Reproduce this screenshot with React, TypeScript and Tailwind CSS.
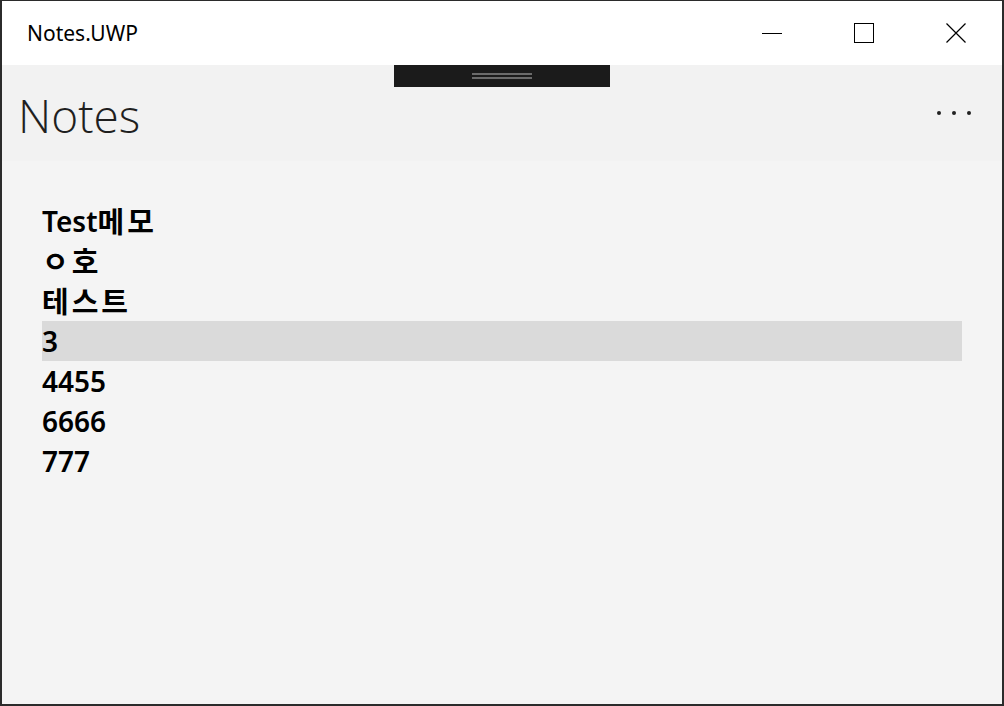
import React from "react";

const notes = ["Test메모", "ㅇ호", "테스트", "3", "4455", "6666", "777"];

// 한글 부분만 조금 넓게 보이도록 분리
function NoteText({ text }: { text: string }) {
  const parts = text.split(/([\u3131-\u318e\uac00-\ud7a3]+)/).filter(Boolean);
  return (
    <>
      {parts.map((p, i) =>
        /[\u3131-\u318e\uac00-\ud7a3]/.test(p) ? (
          <span key={i} className="text-[29px] tracking-[3px]">{p}</span>
        ) : (
          <span key={i}>{p}</span>
        )
      )}
    </>
  );
}

export default function App() {
  const selected = 3;
  return (
    <div className="w-[1004px] h-[706px] bg-[#2b2b2b] pt-px pl-[2px] pr-[2px] pb-[2px] overflow-hidden">
      <div className="w-full h-full flex flex-col bg-[#f4f4f4] [font-family:'Noto_Sans','Noto_Sans_CJK_KR',sans-serif]">
        {/* 타이틀 바 */}
        <div className="h-[64px] bg-white flex items-center shrink-0">
          <div className="pl-[25px] pt-[2px] text-[21px] text-black flex-1">Notes.UWP</div>
          <div className="flex h-full">
            <div className="w-[92px] h-full flex items-center justify-center">
              <div className="w-[20px] h-px bg-black" />
            </div>
            <div className="w-[92px] h-full flex items-center justify-center">
              <div className="w-[20px] h-[20px] border border-black" />
            </div>
            <div className="w-[92px] h-full flex items-center justify-center">
              <svg width="20" height="20" viewBox="0 0 20 20">
                <path d="M0.5 0.5 L19.5 19.5 M19.5 0.5 L0.5 19.5" stroke="black" strokeWidth="1.2" fill="none" />
              </svg>
            </div>
          </div>
        </div>

        {/* 앱 바 */}
        <div className="relative h-[96px] bg-[#f2f2f2] flex items-center shrink-0">
          <div className="absolute left-[392px] top-0 w-[216px] h-[22px] bg-[#1b1b1b] flex flex-col items-center justify-center gap-[2px]">
            <div className="w-[60px] h-[2px] bg-[#6b6b6b]" />
            <div className="w-[60px] h-[2px] bg-[#6b6b6b]" />
          </div>
          <div className="pl-[16px] pt-[3px] text-[46px] font-light text-[#1f1f1f] leading-none flex-1 [font-family:'Open_Sans',sans-serif]">
            Notes
          </div>
          <div className="flex gap-[11px] pr-[31px] items-center">
            <div className="w-[4px] h-[4px] rounded-full bg-[#222]" />
            <div className="w-[4px] h-[4px] rounded-full bg-[#222]" />
            <div className="w-[4px] h-[4px] rounded-full bg-[#222]" />
          </div>
        </div>

        {/* 메모 목록 */}
        <div className="flex-1 px-[40px] pt-[40px]">
          {notes.map((n, i) => (
            <div
              key={i}
              className={`h-[40px] flex items-center text-[28px] font-semibold text-black leading-none ${i === selected ? "bg-[#dadada]" : ""}`}
            >
              <NoteText text={n} />
            </div>
          ))}
        </div>
      </div>
    </div>
  );
}
